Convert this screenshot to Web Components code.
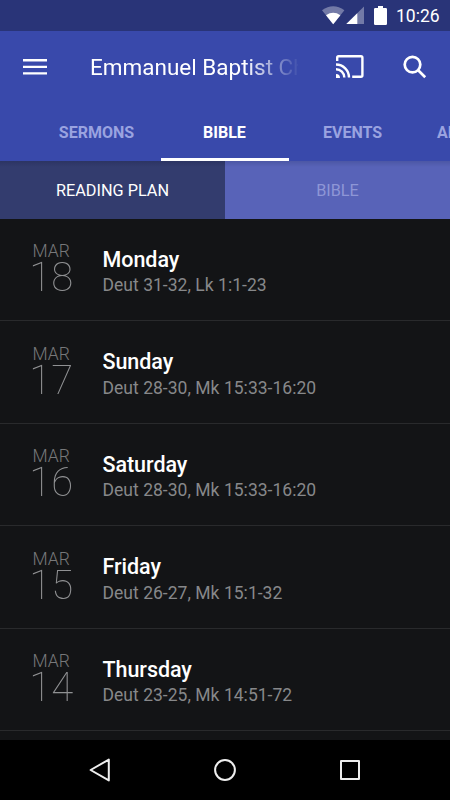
<!DOCTYPE html>
<html lang="en">
<head>
<meta charset="utf-8">
<title>Emmanuel Baptist Church</title>
<style>
html,body{margin:0;height:100%;background:#000;overflow:hidden}
body{font-family:Roboto,"Liberation Sans",sans-serif}
</style>
</head>
<body>
<church-app></church-app>
<script>
class Base extends HTMLElement {
  connectedCallback() {
    if (this.shadowRoot) return;
    this.attachShadow({mode: 'open'}).innerHTML = this.render();
  }
}

customElements.define('status-bar', class extends Base {
  render() {
    return `<style>
:host{display:flex;height:31px;background:#293478;color:#fff;justify-content:flex-end;box-sizing:border-box;padding-right:11px}
svg{display:block;width:70px;height:31px}
span{font-size:17.5px;line-height:32px;width:43px;margin-left:6px;white-space:nowrap}
</style>
<svg viewBox="320 0 70 31" fill="#fff">
<path opacity=".35" d="M322 10.2Q333.2 2.2 344.4 10.2L333.2 24.3Z"/>
<path d="M326 15.2Q333.2 10.3 340.4 15.2L333.2 24.3Z"/>
<path opacity=".35" d="M364 6.5V24H346.3Z"/>
<path d="M357.3 13.2V24H346.3Z"/>
<path d="M378 6h5v2h2.8q1.2 0 1.2 1.2v14.6q0 1.2-1.2 1.2h-10.6q-1.2 0-1.2-1.2V9.2q0-1.2 1.2-1.2H378z"/>
</svg><span>10:26</span>`;
  }
});

customElements.define('app-bar', class extends Base {
  render() {
    return `<style>
:host{display:flex;height:72px;background:#3949ab;color:#fff;align-items:center}
svg{display:block;fill:none;stroke:#fff}
.menu{width:24px;height:18px;margin:-1px 0 0 23px}
h1{margin:0 0 0 43px;width:208px;font-size:22.5px;font-weight:400;line-height:30px;white-space:nowrap;overflow:hidden;-webkit-mask-image:linear-gradient(90deg,#000 155px,transparent 210px);mask-image:linear-gradient(90deg,#000 155px,transparent 210px)}
.cast{width:30px;height:26px;margin:0 0 0 36.5px}
.search{width:26px;height:26px;margin:-1px 0 0 37.5px}
</style>
<svg class="menu" viewBox="0 0 24 18" stroke-width="2.4"><path d="M0 2.3H24M0 8.9H24M0 15.4H24"/></svg>
<h1><slot></slot></h1>
<svg class="cast" viewBox="0 0 30 26" stroke-width="2.4"><path d="M2.2 6.9V3.7Q2.2 2.3 3.6 2.3H26Q27.4 2.3 27.4 3.7V21.3Q27.4 22.7 26 22.7H17.2"/><path d="M1 10.5A13 13 0 0 1 14 23.5M1 15.2A8.3 8.3 0 0 1 9.3 23.5"/><path d="M1 19.9A4 4 0 0 1 5 23.900H1Z" fill="#fff" stroke="none"/></svg>
<svg class="search" viewBox="0 0 26 26" stroke-width="2.7"><circle cx="10.5" cy="10.6" r="7.8"/><path d="M16.2 16.3L23.2 23.2"/></svg>`;
  }
});

customElements.define('tab-item', class extends Base {
  render() {
    return `<style>
:host{flex:0 0 128px;display:flex;align-items:center;justify-content:center;box-sizing:border-box;border-bottom:3px solid transparent;font-size:16px;font-weight:700;color:#9aa3e0;padding:3px 1px 0 0}
:host([active]){color:#fff;border-color:#fff}
:host(:last-child){justify-content:flex-start;padding-left:20px}
</style><slot></slot>`;
  }
});

customElements.define('tab-strip', class extends Base {
  render() {
    return `<style>
:host{display:flex;height:58px;box-sizing:border-box;padding-left:33px;background:#3949ab;overflow:hidden}
</style><slot></slot>`;
  }
});

customElements.define('segment-item', class extends Base {
  render() {
    return `<style>
:host{flex:1;display:flex;align-items:center;justify-content:center;box-sizing:border-box;padding-top:1px;font-size:16.25px;color:#8e96d6;background:linear-gradient(#4c57a5,#5863b8 6px)}
:host([active]){color:#fff;background:linear-gradient(#2c3463,#333c6e 6px)}
</style><slot></slot>`;
  }
});

customElements.define('segment-bar', class extends Base {
  render() {
    return `<style>:host{display:flex;height:57.6px}</style><slot></slot>`;
  }
});

customElements.define('reading-row', class extends Base {
  render() {
    const a = n => this.getAttribute(n);
    return `<style>
:host{display:flex;flex:0 0 102.5px;height:102.5px;box-sizing:border-box;border-bottom:1px solid #292a2c}
.date{width:102.5px;box-sizing:border-box;padding-top:22.8px;text-align:center;color:#77787a}
.month{font-size:17.5px;font-weight:300;line-height:20px}
.day{font-size:40px;font-weight:100;line-height:33px;color:#929395;opacity:.99}
.text{padding-top:27.4px}
.name{font-size:21.5px;font-weight:500;line-height:27px;color:#fff;letter-spacing:-.05px}
.ref{font-size:17.5px;line-height:24px;padding-top:.45px;color:#87888a;letter-spacing:.03px}
</style>
<div class="date"><div class="month">${a('month')}</div><div class="day">${a('day')}</div></div>
<div class="text"><div class="name">${a('name')}</div><div class="ref"><slot></slot></div></div>`;
  }
});

customElements.define('nav-bar', class extends Base {
  render() {
    return `<style>
:host{display:flex;height:60px;background:#000;align-items:center;justify-content:center;gap:101px}
svg{display:block;width:24px;height:24px;fill:none;stroke:#eee;stroke-width:2;stroke-linejoin:round}
</style>
<svg viewBox="0 0 24 24"><path d="M20.8 1.6V22.4L2.6 12Z"/></svg>
<svg viewBox="0 0 24 24"><circle cx="12" cy="12" r="9.9"/></svg>
<svg viewBox="0 0 24 24"><path d="M3 3H21V21H3Z"/></svg>`;
  }
});

customElements.define('church-app', class extends Base {
  render() {
    return `<style>
:host{display:flex;flex-direction:column;width:450px;height:800px;overflow:hidden;background:#131416}
main{flex:1;min-height:0;overflow:hidden;display:flex;flex-direction:column}
</style>
<status-bar></status-bar>
<app-bar>Emmanuel Baptist Church</app-bar>
<tab-strip><tab-item>SERMONS</tab-item><tab-item active>BIBLE</tab-item><tab-item>EVENTS</tab-item><tab-item>ABOUT</tab-item></tab-strip>
<segment-bar><segment-item active>READING PLAN</segment-item><segment-item>BIBLE</segment-item></segment-bar>
<main>
<reading-row month="MAR" day="18" name="Monday">Deut 31-32, Lk 1:1-23</reading-row>
<reading-row month="MAR" day="17" name="Sunday">Deut 28-30, Mk 15:33-16:20</reading-row>
<reading-row month="MAR" day="16" name="Saturday">Deut 28-30, Mk 15:33-16:20</reading-row>
<reading-row month="MAR" day="15" name="Friday">Deut 26-27, Mk 15:1-32</reading-row>
<reading-row month="MAR" day="14" name="Thursday">Deut 23-25, Mk 14:51-72</reading-row>
</main>
<nav-bar></nav-bar>`;
  }
});
</script>
</body>
</html>
